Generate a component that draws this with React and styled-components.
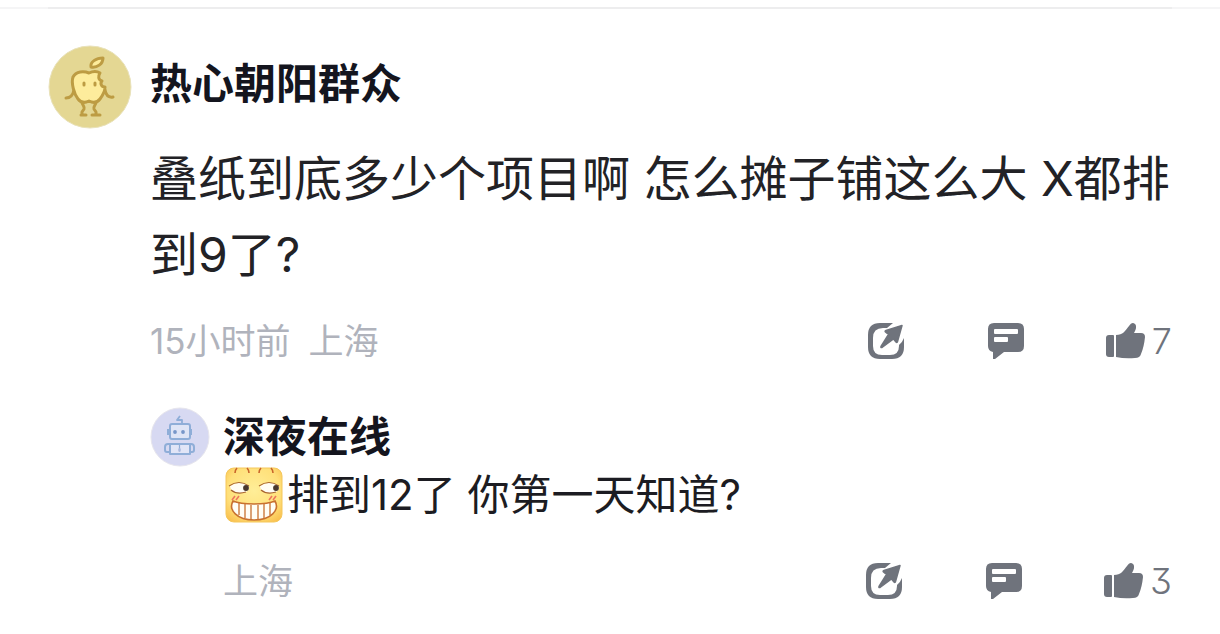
import React from 'react';
import styled, { createGlobalStyle } from 'styled-components';

const GlobalStyle = createGlobalStyle`
  * {
    box-sizing: border-box;
  }
  body {
    margin: 0;
    background: #fff;
    font-family: Inter, "Noto Sans CJK SC", sans-serif;
    font-feature-settings: "cv09";
  }
`;

const Page = styled.main`
  padding-top: 7px;
`;

const Divider = styled.hr`
  height: 2px;
  margin: 0;
  border: 0;
  background: linear-gradient(to right, #f5f5f6 48px, #ededee 48px, #ededee calc(100% - 48px), #f5f5f6 calc(100% - 48px));
`;

const Comment = styled.article`
  display: flex;
  gap: 18px;
  padding: 36px 48px 0;
`;

const Reply = styled.article`
  display: flex;
  gap: 13px;
  margin-top: 42px;
`;

const Avatar = styled.svg`
  flex: none;
  width: ${({ $size }) => $size}px;
  height: ${({ $size }) => $size}px;
`;

const Body = styled.div`
  flex: 1;
  min-width: 0;
`;

const Name = styled.h2`
  margin: 0;
  color: #14151e;
  font-size: 42px;
  font-weight: 700;
  line-height: ${({ $lineHeight }) => $lineHeight}px;
`;

const Text = styled.p`
  margin: 18px 0 0;
  color: #222226;
  font-size: 48px;
  line-height: 76px;
`;

const ReplyText = styled.p`
  display: flex;
  align-items: center;
  gap: 4px;
  margin: 0;
  color: #1c1c22;
  font-size: 42px;
  line-height: 56px;
`;

const Emoji = styled.svg`
  flex: none;
  width: 60px;
  height: 56px;
`;

const Footer = styled.footer`
  display: flex;
  align-items: center;
  justify-content: space-between;
  height: 48px;
  margin-top: ${({ $top }) => $top}px;
`;

const Meta = styled.div`
  display: flex;
  gap: 18px;
  color: #b0b3bc;
  font-size: 35px;
  line-height: 48px;
`;

const Actions = styled.div`
  display: flex;
  gap: 80px;
`;

const Action = styled.button`
  display: flex;
  align-items: center;
  gap: 6px;
  height: 48px;
  padding: 0;
  border: 0;
  background: none;
  color: #6f737c;
  font: inherit;
  font-size: 36px;
  font-weight: 300;
  cursor: pointer;
`;

const Icon = styled.svg`
  display: block;
  width: 40px;
  height: 40px;
`;

const AppleAvatar = () => (
  <Avatar $size={84} viewBox="0 0 84 84" aria-hidden="true">
    <circle cx="42" cy="42" r="41" fill="#e4d793" stroke="#e9e2ba" />
    <g stroke="#bd9c43" strokeWidth="3" strokeLinecap="round" strokeLinejoin="round">
      <path fill="none" d="M26 45c-1 5-3 8-8 8M57 45c1 5 3 8 8 7M34 57c0 3 3 4 2 7l-2 3v3h4M48 57c0 3-3 4-2 7l2 3v3h-4M48 70h4M34 70h-1" />
      <path fill="#fdec9c" d="M41 28c-5-2-13-2-16 4-2 6 1 17 5 22 3 4 7 4 11 2 4 2 8 2 11-2 3-4 5-7 5-12-4 0-5-4-3-6-4-1-4-5-2-8-3-2-7-2-11 0Z" />
      <path fill="#fdec9c" d="M43 22c-1-5 5-9 12-9 0 6-6 10-12 9Z" />
      <path fill="none" d="M36 38v2M47 38v2" />
    </g>
  </Avatar>
);

const RobotAvatar = () => (
  <Avatar $size={60} viewBox="0 0 60 60" aria-hidden="true">
    <circle cx="30" cy="30" r="29" fill="#d7d9f2" stroke="#e6e5ed" />
    <g fill="none" stroke="#8faed8" strokeWidth="2" strokeLinejoin="round">
      <path d="M20 37h-2q-3 0-3 3v3q0 2 2 2h3M39 37h2q3 0 3 3v3q0 2-2 2h-3M18 22v6M41 22v6" />
      <rect x="20" y="17" width="20" height="15" rx="2" fill="#dfe5f6" />
      <rect x="20" y="37" width="20" height="10" fill="#e1e5f7" />
      <path strokeWidth="1.8" d="M32 16v-3h-5l3-4" />
      <path strokeWidth="1.2" d="M29.5 38v5" />
      <ellipse cx="29.5" cy="43" rx="1.3" ry="2" fill="#a9b9de" stroke="none" />
    </g>
    <circle cx="25" cy="25" r="1.9" fill="#7897c9" />
    <circle cx="33" cy="25" r="1.9" fill="#7897c9" />
  </Avatar>
);

const GrinEmoji = () => (
  <Emoji viewBox="0 0 60 56" role="img" aria-label="笑脸">
    <defs>
      <radialGradient id="grin-face" cx="50%" cy="42%" r="72%">
        <stop offset="0" stopColor="#ffee98" />
        <stop offset="0.65" stopColor="#ffe07a" />
        <stop offset="1" stopColor="#f9bd4a" />
      </radialGradient>
    </defs>
    <rect x="3" y="1" width="56" height="54" rx="8" fill="url(#grin-face)" stroke="#f5c75a" />
    <path d="M14 1q-2 2-2 5M24 1q2 2 2 5M38 1q-2 2-2 5M48 1q2 2 2 5" stroke="#c9652b" strokeWidth="1.6" fill="none" />
    <path d="M7 19q9-6 18-1 3 5-2 7-10 3-15-2ZM37 19q9-6 18-1 3 5-2 7-10 3-15-2Z" fill="#fffdf4" />
    <path d="M6 19q10-7 20 0M8 23q6 5 15 2M36 19q10-7 20 0M38 23q6 5 15 2" fill="none" stroke="#a8652f" strokeWidth="1.1" />
    <circle cx="23" cy="21" r="2.9" fill="#49372d" />
    <circle cx="53" cy="21" r="2.9" fill="#49372d" />
    <path d="M9 33l3-4M13 33l3-4M46 33l3-4M50 33l3-4" stroke="#ee765c" strokeWidth="1.6" />
    <path d="M10 34c9 4 33 4 42 0 5 9-4 19-21 19S5 43 10 34Z" fill="#fffef5" stroke="#c8712f" strokeWidth="1.6" />
    <path d="M16 36v12M22 37v14M28 38v15M35 38v15M41 37v14M47 36v12" stroke="#c8712f" strokeWidth="1.3" />
  </Emoji>
);

const ShareIcon = () => (
  <Icon viewBox="0 0 40 40" aria-hidden="true">
    <path
      fill="currentColor"
      d="M14 2h13l-6 5h-4Q7 7 7 17v8q0 9 9 9h8q9 0 9-9v-1q3-2 5-7v9q0 12-12 12H14Q2 38 2 26V14Q2 2 14 2Z"
    />
    <path
      fill="currentColor"
      stroke="currentColor"
      strokeWidth="1.5"
      strokeLinejoin="round"
      d="M36 4.500l-4.500 16q-.5 1.500-1.500.5l-2.500-3-11.500 8.500q-1.500.5-1-1l7.500-12-3-2.500q-1-1 .5-1.500Z"
    />
  </Icon>
);

const ReplyIcon = () => (
  <Icon viewBox="0 0 40 40" aria-hidden="true">
    <path
      fill="currentColor"
      fillRule="evenodd"
      d="M8 2h24q6 0 6 6v17q0 6-6 6H18l-9 7H7v-7Q2 30 2 25V8q0-6 6-6ZM9 8q-1 0-1 1v3q0 1 1 1h22q1 0 1-1V9q0-1-1-1ZM9 16q-1 0-1 1v3q0 1 1 1h12q1 0 1-1v-3q0-1-1-1Z"
    />
  </Icon>
);

const LikeIcon = () => (
  <Icon viewBox="2 0 40 40" aria-hidden="true">
    <path fill="currentColor" d="M5 14h4q1 0 1 1v20q0 1-1 1H5q-3 0-3-3V17q0-3 3-3Z" />
    <path
      fill="currentColor"
      d="M12 14c7 0 9-4 13-9 2-3 4-4 6-2s1 6-1 9h7q4 0 4 4-1 10-4 17-1 4-6 4-10 1-19-1Z"
    />
  </Icon>
);

const CommentActions = ({ likes }) => (
  <Actions>
    <Action type="button" aria-label="分享">
      <ShareIcon />
    </Action>
    <Action type="button" aria-label="回复">
      <ReplyIcon />
    </Action>
    <Action type="button">
      <LikeIcon />
      {likes}
    </Action>
  </Actions>
);

const App = () => (
  <>
    <GlobalStyle />
    <Page>
      <Divider />
      <Comment>
        <AppleAvatar />
        <Body>
          <Name $lineHeight={78}>热心朝阳群众</Name>
          <Text>叠纸到底多少个项目啊 怎么摊子铺这么大 X都排到9了?</Text>
          <Footer $top={24}>
            <Meta>
              <span>15小时前</span>
              <span>上海</span>
            </Meta>
            <CommentActions likes={7} />
          </Footer>
          <Reply>
            <RobotAvatar />
            <Body>
              <Name $lineHeight={60}>深夜在线</Name>
              <ReplyText>
                <GrinEmoji />
                <span>排到12了 你第一天知道?</span>
              </ReplyText>
              <Footer $top={34}>
                <Meta>
                  <span>上海</span>
                </Meta>
                <CommentActions likes={3} />
              </Footer>
            </Body>
          </Reply>
        </Body>
      </Comment>
    </Page>
  </>
);

export default App;
